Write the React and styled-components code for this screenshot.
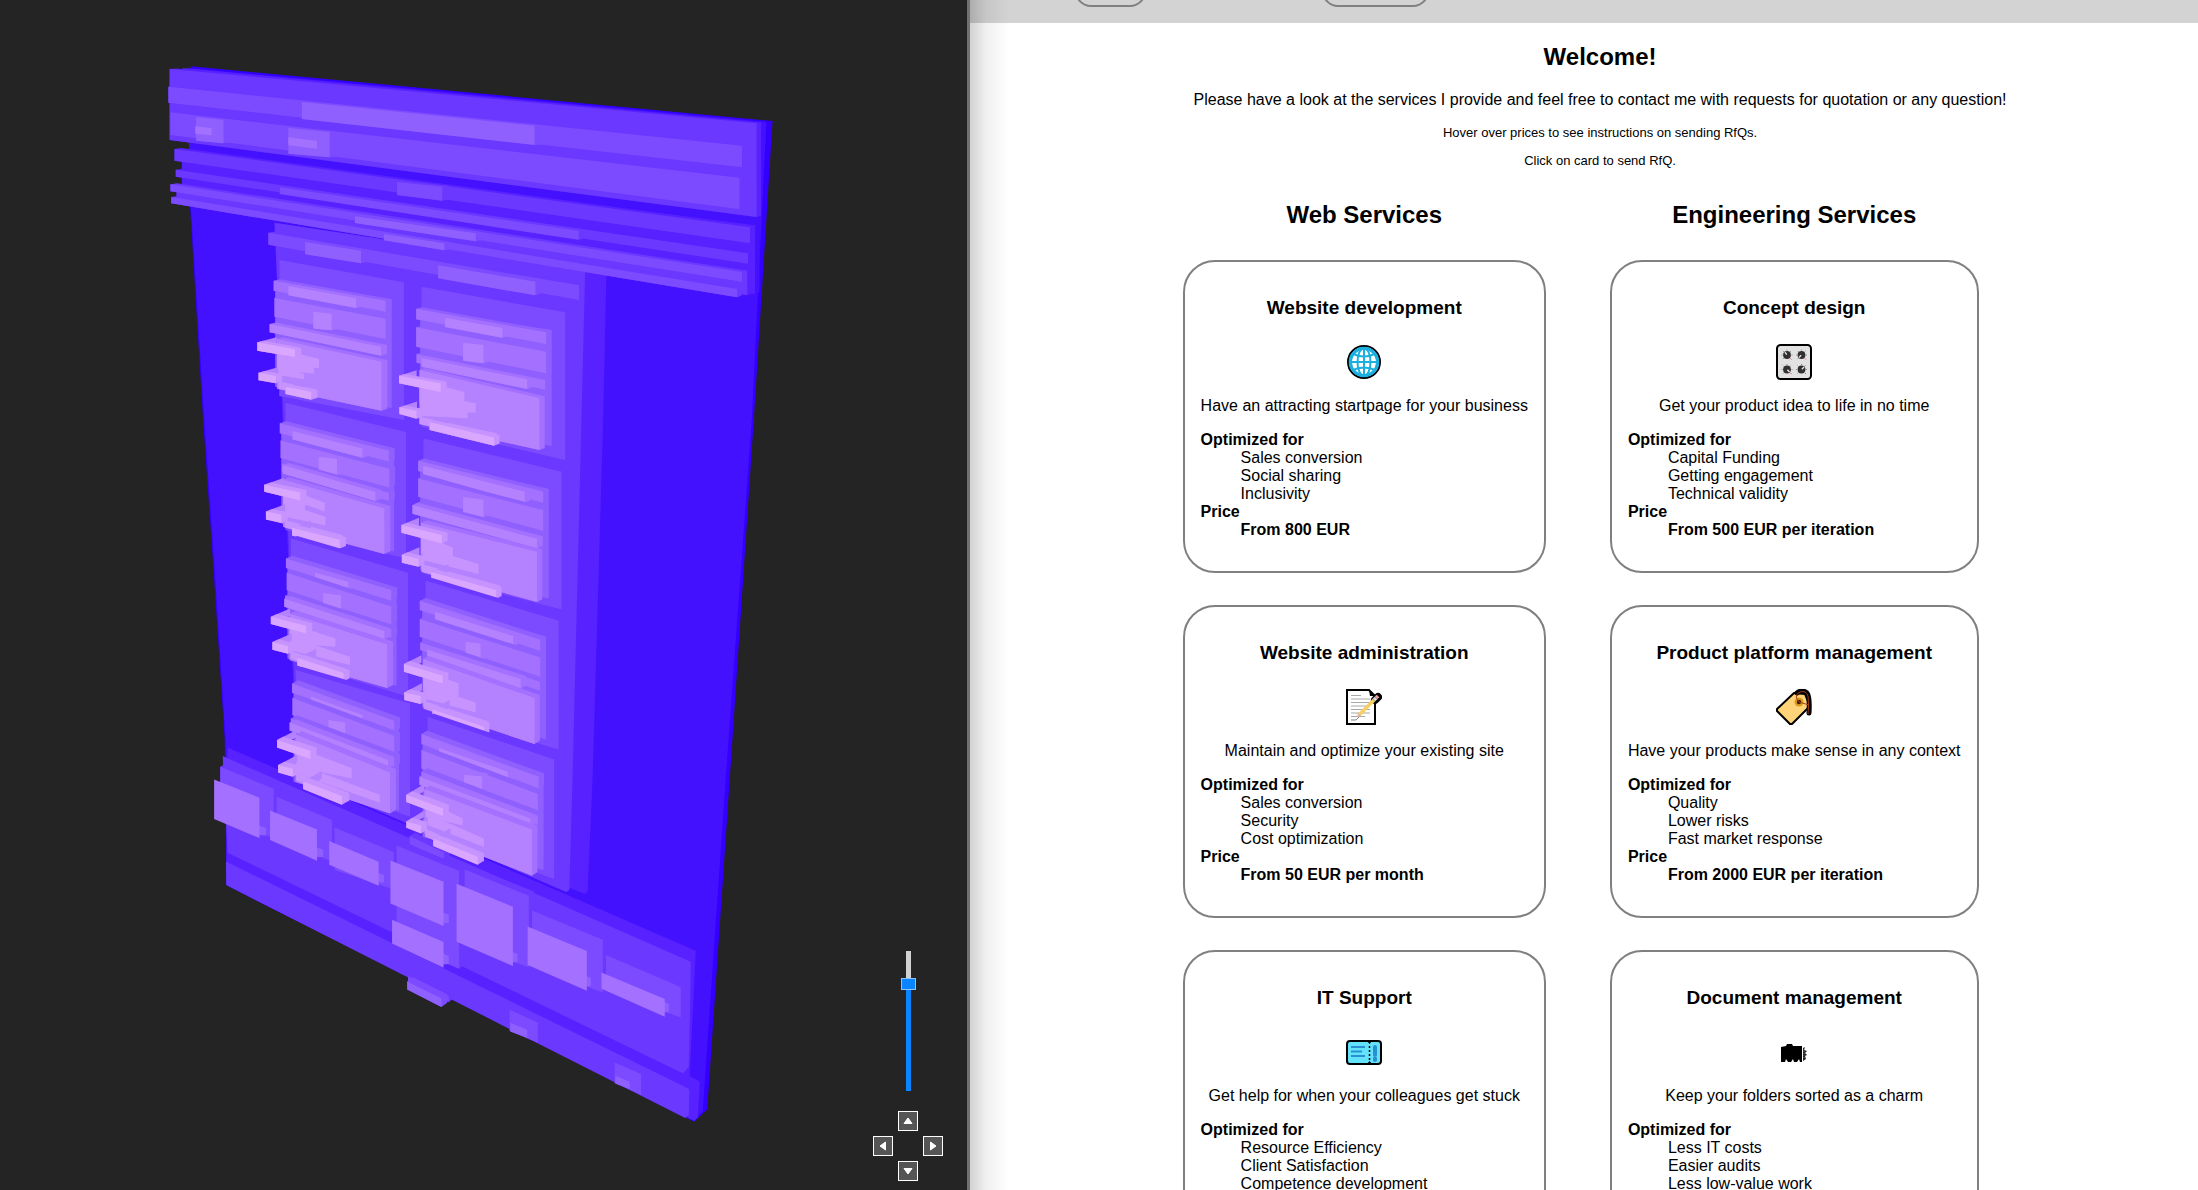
import React, { useState } from "react";
import styled, { createGlobalStyle } from "styled-components";

const GlobalStyle = createGlobalStyle`
  *, *::before, *::after { box-sizing: border-box; }
  body {
    margin: 0;
    background: #fff;
    color: #000;
    font-family: "Liberation Sans", Arial, sans-serif;
    font-size: 16px;
    line-height: 18px;
  }
`;

/* ---------- layout ---------- */

const Split = styled.div`
  display: grid;
  grid-template-columns: 44% minmax(0, 1fr);
  height: 100vh;
  overflow: hidden;
`;

const Viewer = styled.section`
  position: relative;
  overflow: hidden;
  background: #242424;
`;

const Scene = styled.svg`
  display: block;
  width: 100%;
  height: auto;
`;

const Controls = styled.div`
  position: absolute;
  right: 24px;
  bottom: 9px;
  display: flex;
  flex-direction: column;
  align-items: center;
  gap: 20px;
`;

const Zoom = styled.input`
  appearance: none;
  writing-mode: vertical-lr;
  direction: rtl;
  width: 15px;
  height: 140px;
  margin: 0;
  background: linear-gradient(to bottom, #d2d2d2 33px, #0a84ff 33px) center / 5px 100% no-repeat;

  &::-webkit-slider-runnable-track {
    width: 15px;
    background: transparent;
  }
  &::-webkit-slider-thumb {
    appearance: none;
    width: 15px;
    height: 12px;
    border: 1px solid #8cc4f8;
    border-radius: 0;
    background: #0a84ff;
  }
`;

const Pad = styled.div`
  display: grid;
  grid-template-columns: repeat(3, 20px);
  grid-template-rows: repeat(3, 20px);
  grid-template-areas: ". up ." "left . right" ". down .";
  gap: 5px;
`;

const PadButton = styled.button`
  grid-area: ${(p) => p.$area};
  display: grid;
  place-items: center;
  padding: 0;
  border: 1px solid #fff;
  background: #555;

  svg {
    display: block;
    transform: rotate(${(p) => p.$turn}deg);
  }
`;

const Site = styled.div`
  position: relative;
  border-left: 3px solid #707070;
  background: #fff;
  overflow: hidden;

  &::before {
    content: "";
    position: absolute;
    inset: 0 auto 0 0;
    width: 40px;
    background: linear-gradient(to right, rgba(0, 0, 0, 0.18), rgba(0, 0, 0, 0.06) 40%, transparent);
    pointer-events: none;
  }
`;

const Nav = styled.nav`
  display: flex;
  align-items: flex-end;
  gap: 176px;
  height: 23px;
  padding: 0 0 16px 105px;
  background: #d3d3d3;
`;

const NavButton = styled.button`
  flex: none;
  width: ${(p) => (p.$wide ? 107 : 71)}px;
  height: 42px;
  border: 2px solid #808080;
  border-radius: 16px;
  background: transparent;
`;

const Main = styled.main`
  padding: 20px 0 0 32px;
  text-align: center;
`;

const Heading = styled.h2`
  margin: 0;
  font-size: 24px;
  line-height: 27px;
`;

const Lead = styled.p`
  margin: 21px 0 16px;
`;

const Hint = styled.p`
  margin: 0 0 13px;
  font-size: 13px;
  line-height: 15px;
`;

const Services = styled.div`
  display: grid;
  grid-template-columns: max-content max-content;
  justify-content: center;
  gap: 32px 64px;
  padding: 20px 39px 0 0;
`;

const Card = styled.article`
  padding: 35px 16px 32px;
  border: 2px solid #808080;
  border-radius: 32px;
`;

const CardTitle = styled.h3`
  margin: 0;
  font-size: 19px;
  line-height: 21px;
`;

const CardIcon = styled.div`
  display: flex;
  justify-content: center;
  padding: 26px 0 17px;

  svg { display: block; width: 36px; height: 36px; }
`;

const Summary = styled.p`
  margin: 0 0 16px;
  white-space: nowrap;
`;

const Facts = styled.dl`
  margin: 0;
  text-align: left;
`;

const Term = styled.dt`
  font-weight: 700;
`;

const Fact = styled.dd`
  margin: 0 0 0 40px;
  font-weight: ${(p) => (p.$strong ? 700 : 400)};
`;

/* ---------- layered page model ---------- */

const SHADES = ["#3300ff", "#4411ff", "#5722ff", "#6a38ff", "#7d4bff", "#9060ff", "#a370ff", "#b482ff", "#c693ff", "#d9a7ff"];
const DEPTH = 0.004;
const VANISH = [4200, -350];

/* slab: [level, leftX, leftTop, leftBottom, rightX, rightTop, rightBottom] */
const FOOTER = [
  [4, 636, 2388, 2412, 720, 2437, 2462],
  [4, 172, 2180, 2330, 303, 2246, 2395],
  [4, 310, 2270, 2400, 446, 2340, 2464],
  [4, 452, 2362, 2490, 597, 2436, 2548],
  [4, 765, 2485, 2705, 928, 2567, 2782],
  [4, 936, 2611, 2780, 1109, 2699, 2857],
  [4, 1117, 2745, 2850, 1300, 2841, 2932],
  [4, 604, 2416, 2705, 757, 2493, 2786],
];

const FOOTER_LINKS = [
  [5, 262, 2355, 2385, 284, 2364, 2386],
  [6, 157, 2218, 2337, 268, 2273, 2394],
  [5, 402, 2420, 2450, 424, 2429, 2451],
  [6, 294, 2311, 2400, 409, 2368, 2462],
  [5, 552, 2496, 2526, 573, 2505, 2527],
  [6, 439, 2403, 2474, 560, 2465, 2537],
  [5, 711, 2614, 2650, 732, 2624, 2649],
  [6, 589, 2461, 2590, 719, 2525, 2658],
  [5, 711, 2738, 2774, 732, 2748, 2772],
  [6, 593, 2639, 2710, 719, 2706, 2783],
  [5, 879, 2732, 2768, 900, 2742, 2766],
  [6, 751, 2531, 2705, 889, 2600, 2778],
  [5, 1060, 2804, 2842, 1080, 2813, 2838],
  [6, 925, 2659, 2775, 1070, 2733, 2852],
  [5, 1250, 2882, 2920, 1271, 2891, 2914],
  [6, 1106, 2797, 2846, 1261, 2877, 2930],
];

const FOOTER_BAR = [
  [4, 632, 2808, 2842, 732, 2868, 2886],
  [5, 630, 2824, 2848, 714, 2875, 2901],
  [4, 881, 2909, 2972, 950, 2947, 3008],
  [5, 883, 2948, 2974, 924, 2970, 2993],
  [4, 1138, 3067, 3127, 1203, 3102, 3165],
  [5, 1140, 3107, 3130, 1175, 3125, 3147],
];

const GRID_HEAD = [
  [4, 290, 578, 614, 1051, 736, 780],
  [5, 380, 606, 643, 517, 632, 670],
  [5, 706, 676, 715, 944, 725, 766],
];

const CARDS = [
  [4, 317, 660, 1068, 622, 727, 1140],
  [5, 307, 722, 1040, 592, 778, 1104],
  [6, 303, 722, 752, 577, 782, 815],
  [7, 339, 738, 766, 505, 775, 804],
  [6, 305, 774, 830, 577, 836, 897],
  [7, 400, 815, 866, 445, 821, 871],
  [6, 305, 852, 876, 577, 915, 940],
  [7, 293, 852, 877, 566, 920, 947],
  [7, 311, 897, 1046, 567, 965, 1112],
  [8, 311, 925, 975, 414, 957, 984],
  [8, 311, 950, 990, 402, 975, 1001],
  [8, 315, 975, 1005, 377, 1002, 1018],
  [9, 263, 907, 932, 355, 928, 951],
  [9, 266, 998, 1021, 308, 1008, 1030],
  [8, 315, 1024, 1046, 400, 1046, 1070],
  [9, 332, 1040, 1062, 395, 1055, 1079],

  [4, 332, 1088, 1470, 627, 1176, 1555],
  [5, 322, 1150, 1450, 598, 1227, 1535],
  [6, 318, 1150, 1180, 585, 1231, 1264],
  [7, 349, 1173, 1198, 520, 1225, 1254],
  [6, 320, 1201, 1254, 586, 1286, 1342],
  [7, 413, 1250, 1300, 458, 1256, 1307],
  [6, 323, 1270, 1295, 585, 1358, 1382],
  [7, 325, 1275, 1300, 552, 1356, 1383],
  [7, 326, 1318, 1460, 574, 1405, 1542],
  [8, 326, 1345, 1400, 380, 1365, 1420],
  [8, 375, 1363, 1392, 428, 1388, 1414],
  [8, 330, 1390, 1430, 430, 1430, 1456],
  [9, 280, 1334, 1355, 368, 1357, 1381],
  [9, 284, 1414, 1438, 322, 1423, 1449],
  [8, 330, 1440, 1462, 472, 1485, 1510],
  [9, 348, 1463, 1486, 465, 1499, 1525],

  [4, 345, 1495, 1862, 632, 1598, 1970],
  [5, 337, 1555, 1855, 604, 1645, 1938],
  [6, 333, 1555, 1584, 591, 1650, 1682],
  [7, 404, 1597, 1620, 486, 1626, 1651],
  [6, 335, 1598, 1650, 591, 1699, 1755],
  [7, 424, 1659, 1710, 468, 1666, 1715],
  [6, 331, 1667, 1695, 591, 1767, 1792],
  [7, 329, 1676, 1700, 574, 1773, 1798],
  [7, 342, 1720, 1860, 581, 1813, 1944],
  [8, 342, 1750, 1810, 454, 1795, 1820],
  [8, 342, 1790, 1830, 490, 1850, 1875],
  [9, 296, 1730, 1752, 382, 1757, 1780],
  [9, 300, 1806, 1829, 338, 1818, 1841],
  [8, 344, 1832, 1855, 484, 1890, 1914],
  [9, 361, 1853, 1876, 474, 1899, 1924],

  [4, 357, 1890, 2210, 637, 1990, 2330],
  [5, 352, 1930, 2225, 610, 2035, 2312],
  [6, 348, 1930, 1958, 598, 2042, 2074],
  [7, 394, 1969, 1992, 520, 2025, 2052],
  [6, 349, 1974, 2025, 598, 2087, 2142],
  [7, 437, 2040, 2087, 478, 2047, 2096],
  [6, 345, 2035, 2060, 598, 2152, 2180],
  [7, 342, 2047, 2071, 583, 2160, 2184],
  [7, 357, 2083, 2225, 588, 2197, 2320],
  [8, 356, 2120, 2180, 494, 2184, 2215],
  [8, 360, 2170, 2200, 563, 2264, 2288],
  [9, 311, 2100, 2122, 393, 2132, 2157],
  [9, 314, 2175, 2197, 350, 2186, 2210],
  [8, 358, 2198, 2220, 488, 2260, 2284],
  [9, 375, 2224, 2247, 470, 2268, 2294],

  [4, 665, 740, 1160, 1017, 817, 1260],
  [5, 662, 808, 1150, 984, 870, 1218],
  [6, 652, 806, 838, 970, 877, 912],
  [7, 723, 833, 861, 863, 864, 893],
  [6, 652, 862, 920, 970, 935, 1000],
  [7, 767, 908, 963, 817, 915, 970],
  [6, 653, 942, 968, 968, 1020, 1049],
  [7, 665, 954, 980, 924, 1018, 1047],
  [7, 660, 990, 1150, 954, 1074, 1230],
  [8, 660, 1020, 1090, 770, 1056, 1085],
  [8, 662, 1060, 1110, 798, 1090, 1118],
  [8, 665, 1090, 1128, 778, 1112, 1135],
  [9, 610, 1007, 1030, 712, 1030, 1056],
  [9, 611, 1102, 1122, 653, 1112, 1136],
  [8, 660, 1130, 1153, 850, 1180, 1204],
  [9, 685, 1147, 1170, 843, 1192, 1217],

  [4, 670, 1195, 1600, 1008, 1295, 1708],
  [5, 662, 1264, 1590, 977, 1347, 1675],
  [6, 657, 1262, 1293, 963, 1354, 1388],
  [7, 669, 1277, 1302, 918, 1355, 1388],
  [6, 657, 1315, 1370, 963, 1410, 1472],
  [7, 767, 1371, 1424, 817, 1379, 1431],
  [6, 650, 1390, 1420, 962, 1489, 1518],
  [7, 643, 1395, 1421, 948, 1496, 1525],
  [7, 664, 1448, 1590, 948, 1535, 1686],
  [8, 664, 1480, 1540, 742, 1523, 1555],
  [8, 668, 1520, 1560, 805, 1572, 1602],
  [9, 616, 1455, 1478, 715, 1485, 1510],
  [9, 617, 1544, 1568, 658, 1556, 1580],
  [8, 665, 1572, 1596, 858, 1636, 1660],
  [9, 689, 1596, 1620, 848, 1650, 1676],

  [4, 675, 1621, 2010, 1001, 1742, 2128],
  [5, 667, 1680, 2000, 970, 1790, 2098],
  [6, 661, 1682, 1710, 956, 1799, 1833],
  [7, 698, 1715, 1740, 890, 1788, 1819],
  [6, 661, 1737, 1790, 956, 1852, 1910],
  [7, 773, 1805, 1855, 810, 1811, 1862],
  [6, 662, 1807, 1830, 955, 1925, 1952],
  [7, 679, 1828, 1850, 908, 1917, 1945],
  [7, 669, 1857, 2000, 942, 1974, 2112],
  [8, 669, 1890, 1950, 756, 1930, 1970],
  [8, 672, 1935, 1975, 798, 1988, 2017],
  [9, 622, 1872, 1895, 717, 1907, 1930],
  [9, 623, 1957, 1980, 663, 1968, 1992],
  [8, 670, 1982, 2006, 830, 2044, 2070],
  [9, 692, 2008, 2031, 818, 2060, 2086],

  [4, 680, 2030, 2380, 990, 2158, 2517],
  [5, 668, 2080, 2390, 964, 2200, 2490],
  [6, 665, 2082, 2112, 952, 2210, 2245],
  [7, 708, 2124, 2149, 877, 2195, 2226],
  [6, 665, 2130, 2185, 950, 2262, 2318],
  [7, 769, 2204, 2255, 813, 2209, 2263],
  [6, 665, 2195, 2220, 950, 2327, 2355],
  [7, 660, 2210, 2234, 932, 2335, 2362],
  [7, 672, 2247, 2380, 936, 2368, 2507],
  [8, 675, 2280, 2330, 766, 2335, 2356],
  [8, 680, 2322, 2355, 818, 2395, 2421],
  [9, 628, 2264, 2286, 718, 2305, 2328],
  [9, 628, 2344, 2363, 664, 2356, 2380],
  [8, 674, 2366, 2390, 818, 2440, 2464],
  [9, 694, 2396, 2418, 803, 2450, 2474],
];

const BANNER = [
  [3, 48, 87, 300, 1486, 250, 531],
  [4, 45, 140, 188, 1450, 317, 382],
  [5, 372, 186, 237, 942, 257, 315],
  [4, 50, 217, 285, 1444, 413, 508],
  [5, 113, 231, 302, 180, 240, 310],
  [6, 111, 259, 281, 151, 264, 286],
  [5, 339, 264, 341, 440, 276, 352],
  [6, 339, 292, 316, 409, 303, 326],
  [2, 78, 335, 480, 1482, 556, 762],
  [3, 60, 327, 362, 1470, 562, 610],
  [4, 605, 426, 465, 716, 440, 482],
  [3, 63, 389, 410, 1465, 640, 671],
  [4, 318, 442, 462, 1050, 572, 599],
  [3, 65, 440, 485, 1463, 692, 766],
  [4, 50, 433, 454, 1450, 696, 725],
  [5, 502, 529, 549, 798, 580, 604],
  [4, 52, 471, 490, 1438, 747, 772],
  [5, 573, 582, 601, 721, 610, 631],
];

const recede = ([x, y], steps = 1) => [
  x + (VANISH[0] - x) * DEPTH * steps,
  y + (VANISH[1] - y) * DEPTH * steps,
];
const toPoints = (list) => list.map((p) => p.join(",")).join(" ");

function Slab({ data, flat }) {
  const [level, x1, t1, b1, x2, t2, b2] = data;
  const tl = [x1, t1];
  const tr = [x2, t2];
  const br = [x2, b2];
  const bl = [x1, b1];
  return (
    <>
      {level === 9 && <polygon fill={SHADES[7]} points={toPoints([tl, recede(tl, 3), recede(bl, 3), bl])} />}
      {!flat && level !== 8 && (
        <polygon fill={SHADES[level - 1]} points={toPoints([tl, recede(tl), recede(tr), recede(br), br, bl])} />
      )}
      <polygon fill={SHADES[level]} points={toPoints([tl, tr, br, bl])} />
    </>
  );
}

const Slabs = ({ items, flat }) => items.map((d) => <Slab key={d.join()} data={d} flat={flat} />);

function PageModel() {
  return (
    <Scene viewBox="0 0 967 1190" role="img" aria-label="3D view of the page structure">
      <g transform="translate(150 40) scale(0.40816 0.33333)">
        <polygon fill={SHADES[0]} points="100,79 1525,243 1479,1140 1420,2220 1365,3208 1333,3245 187,2535 183,2100 155,1580 130,1140 98,500" />
        <polygon fill={SHADES[1]} points="90,84 1510,246 1474,1140 1410,2220 1354,3214 1333,3243 187,2535 185,2100 158,1580 133,1140 100,500" />
        <polygon fill={SHADES[2]} points="80,84 1498,248 1486,525 80,300" />
        <polygon fill={SHADES[2]} points="190,2122 1337,2732 1322,3108 1347,3124 1342,3232 1333,3242 187,2535" />
        <polygon fill={SHADES[3]} points="178,2148 1325,2765 1320,3080 1306,3100 190,2438" />
        <polygon fill={SHADES[3]} points="186,2464 1321,3147 1320,3225 1311,3234 187,2535" />
        <Slabs items={FOOTER} />
        <Slabs items={FOOTER_LINKS} flat />
        <Slabs items={FOOTER_BAR} />
        <polygon fill={SHADES[2]} points="305,548 1118,700 1110,1140 1084,2220 1072,2556 1065,2562 360,2210" />
        <polygon fill={SHADES[3]} points="305,548 1066,690 1058,1080 1035,2220 1027,2550 1020,2556 363,2210 325,1080" />
        <Slabs items={GRID_HEAD} />
        <Slabs items={CARDS} />
        <Slabs items={BANNER} />
      </g>
    </Scene>
  );
}

/* ---------- card pictograms ---------- */

const Globe = () => (
  <svg viewBox="0 0 36 36" aria-hidden="true">
    <circle cx="18" cy="18" r="16" fill="#fff" stroke="#000" strokeWidth="2" />
    <g fill="none" stroke="#1cb0e0" strokeWidth="2">
      <circle cx="18" cy="18" r="13.6" strokeWidth="3.4" />
      <ellipse cx="18" cy="18" rx="6.5" ry="14" />
      <path d="M18 3v30M3 18h30M6 9.5q12 6 24 0M6 26.5q12-6 24 0" />
    </g>
  </svg>
);

const Knob = ({ x, y, turn }) => (
  <g transform={`translate(${x} ${y})`}>
    <path d="M-5.500 0h1M4.500 0h1M0-5.500v1M-4-4l.8.8M4-4l-.8.8M-4 4l.8-.8" stroke="#777" strokeWidth=".8" />
    <path d="M3.500 3.500l1 1" stroke="#e05a50" strokeWidth="1" />
    <circle r="3.900" fill="#303030" />
    <path d="M0-.5v-3" stroke="#e8e8e8" strokeWidth="1.400" transform={`rotate(${turn})`} />
  </g>
);

const Knobs = () => (
  <svg viewBox="0 0 36 36" aria-hidden="true">
    <rect x="1" y="1" width="34" height="34" rx="3.500" fill="#e2e2e2" stroke="#000" strokeWidth="2" />
    <Knob x={11} y={11} turn={-35} />
    <Knob x={25.500} y={11} turn={225} />
    <Knob x={11} y={25.500} turn={135} />
    <Knob x={25.500} y={25.500} turn={45} />
  </svg>
);

const Memo = () => (
  <svg viewBox="0 0 36 36" aria-hidden="true">
    <path d="M1 1h22l6 6v28H1z" fill="#fff" stroke="#000" strokeWidth="2" />
    <path d="M23 1l1 6h6" fill="#000" />
    <path d="M5 6.500h10M5 10h19M5 13.500h19M5 17h19M5 20.500h19M5 24h19M5 27.500h14" stroke="#a8a8a8" strokeWidth="1" />
    <path d="M5 31h5l3-3" fill="none" stroke="#666" strokeWidth=".8" />
    <path d="M29 11L32 8" stroke="#000" strokeWidth="8" strokeLinecap="round" />
    <path d="M13 26L28 11" stroke="#f6cf63" strokeWidth="3.600" />
    <path d="M28 11l2-2" stroke="#d5dbe0" strokeWidth="3.800" />
    <path d="M30 9l2-2" stroke="#e9a09a" strokeWidth="3.800" />
    <path d="M11 28l1-4 3 3z" fill="#e8b9a0" />
  </svg>
);

const Tag = () => (
  <svg viewBox="0 0 36 36" aria-hidden="true">
    <path d="M18 4L29 5l4 10-1 4-16 16h-2L1 22v-2z" fill="#ffd479" stroke="#000" strokeWidth="2" strokeLinejoin="round" />
    <path d="M21 4q5-4 10 0 3 4 2 20" fill="none" stroke="#000" strokeWidth="5" strokeLinecap="round" />
    <circle cx="23" cy="13" r="4.500" fill="#d99a1f" />
    <circle cx="23" cy="13" r="2.200" fill="#3a1c00" />
    <path d="M23 13q-6-7 1-10 6-2 8 4 1 9 0 18M23 13l10 3" fill="none" stroke="#a63a16" strokeWidth="1" />
  </svg>
);

const Ticket = () => (
  <svg viewBox="0 0 36 36" aria-hidden="true">
    <rect x="1" y="7" width="34" height="23" rx="3" fill="#63e2fb" stroke="#000" strokeWidth="2" />
    <path d="M5 13h14M5 17.500h11M5 22h14" stroke="#2a8fd0" strokeWidth="2" />
    <path d="M29 13v8M29 24.500v1.500" stroke="#2a8fd0" strokeWidth="4" strokeLinecap="round" />
    <path d="M21 7l2.500 3L26 7zM21 30l2.500-3 2.500 3z" />
    <path d="M23.500 12v14" stroke="#000" strokeWidth="1.500" strokeDasharray="2 2" />
  </svg>
);

const Folders = () => (
  <svg viewBox="0 0 36 36" aria-hidden="true">
    <path d="M5 13l5-1 1-2h5l1 2h9v16h-2l-1-3-2 3h-3l-1-3-2 3h-3l-2-3-1 3H5z" />
    <path d="M27 14l2-1-1 3 3 1-2 2 2 2-2 1 1 3-3 2z" fill="#222" />
    <path d="M28 15v10" stroke="#777" strokeWidth=".8" strokeDasharray="1 1" />
  </svg>
);

const Arrow = () => (
  <svg width="10" height="8" viewBox="0 0 10 8" aria-hidden="true">
    <path d="M5 1L9 6.500H1z" fill="#fff" stroke="#fff" strokeLinejoin="round" />
  </svg>
);

const SERVICES = [
  { title: "Website development", icon: Globe, summary: "Have an attracting startpage for your business", goals: ["Sales conversion", "Social sharing", "Inclusivity"], price: "From 800 EUR" },
  { title: "Concept design", icon: Knobs, summary: "Get your product idea to life in no time", goals: ["Capital Funding", "Getting engagement", "Technical validity"], price: "From 500 EUR per iteration" },
  { title: "Website administration", icon: Memo, summary: "Maintain and optimize your existing site", goals: ["Sales conversion", "Security", "Cost optimization"], price: "From 50 EUR per month" },
  { title: "Product platform management", icon: Tag, summary: "Have your products make sense in any context", goals: ["Quality", "Lower risks", "Fast market response"], price: "From 2000 EUR per iteration" },
  { title: "IT Support", icon: Ticket, summary: "Get help for when your colleagues get stuck", goals: ["Resource Efficiency", "Client Satisfaction", "Competence development"] },
  { title: "Document management", icon: Folders, summary: "Keep your folders sorted as a charm", goals: ["Less IT costs", "Easier audits", "Less low-value work"] },
];

const DIRECTIONS = [
  { area: "up", turn: 0 },
  { area: "left", turn: -90 },
  { area: "right", turn: 90 },
  { area: "down", turn: 180 },
];

function ServiceCard({ service }) {
  const Icon = service.icon;
  return (
    <Card>
      <CardTitle>{service.title}</CardTitle>
      <CardIcon><Icon /></CardIcon>
      <Summary>{service.summary}</Summary>
      <Facts>
        <Term>Optimized for</Term>
        {service.goals.map((goal) => <Fact key={goal}>{goal}</Fact>)}
        {service.price && (
          <>
            <Term>Price</Term>
            <Fact $strong>{service.price}</Fact>
          </>
        )}
      </Facts>
    </Card>
  );
}

export default function App() {
  const [zoom, setZoom] = useState(79);
  return (
    <>
      <GlobalStyle />
      <Split>
        <Viewer>
          <PageModel />
          <Controls>
            <Zoom type="range" min="0" max="100" aria-label="Zoom" value={zoom} onChange={(e) => setZoom(Number(e.target.value))} />
            <Pad>
              {DIRECTIONS.map((d) => (
                <PadButton key={d.area} type="button" aria-label={`Move ${d.area}`} $area={d.area} $turn={d.turn}>
                  <Arrow />
                </PadButton>
              ))}
            </Pad>
          </Controls>
        </Viewer>
        <Site>
          <Nav>
            <NavButton type="button" aria-label="Home" />
            <NavButton type="button" aria-label="Services" $wide />
          </Nav>
          <Main>
            <Heading>Welcome!</Heading>
            <Lead>Please have a look at the services I provide and feel free to contact me with requests for quotation or any question!</Lead>
            <Hint>Hover over prices to see instructions on sending RfQs.</Hint>
            <Hint>Click on card to send RfQ.</Hint>
            <Services>
              <Heading>Web Services</Heading>
              <Heading>Engineering Services</Heading>
              {SERVICES.map((s) => <ServiceCard key={s.title} service={s} />)}
            </Services>
          </Main>
        </Site>
      </Split>
    </>
  );
}
